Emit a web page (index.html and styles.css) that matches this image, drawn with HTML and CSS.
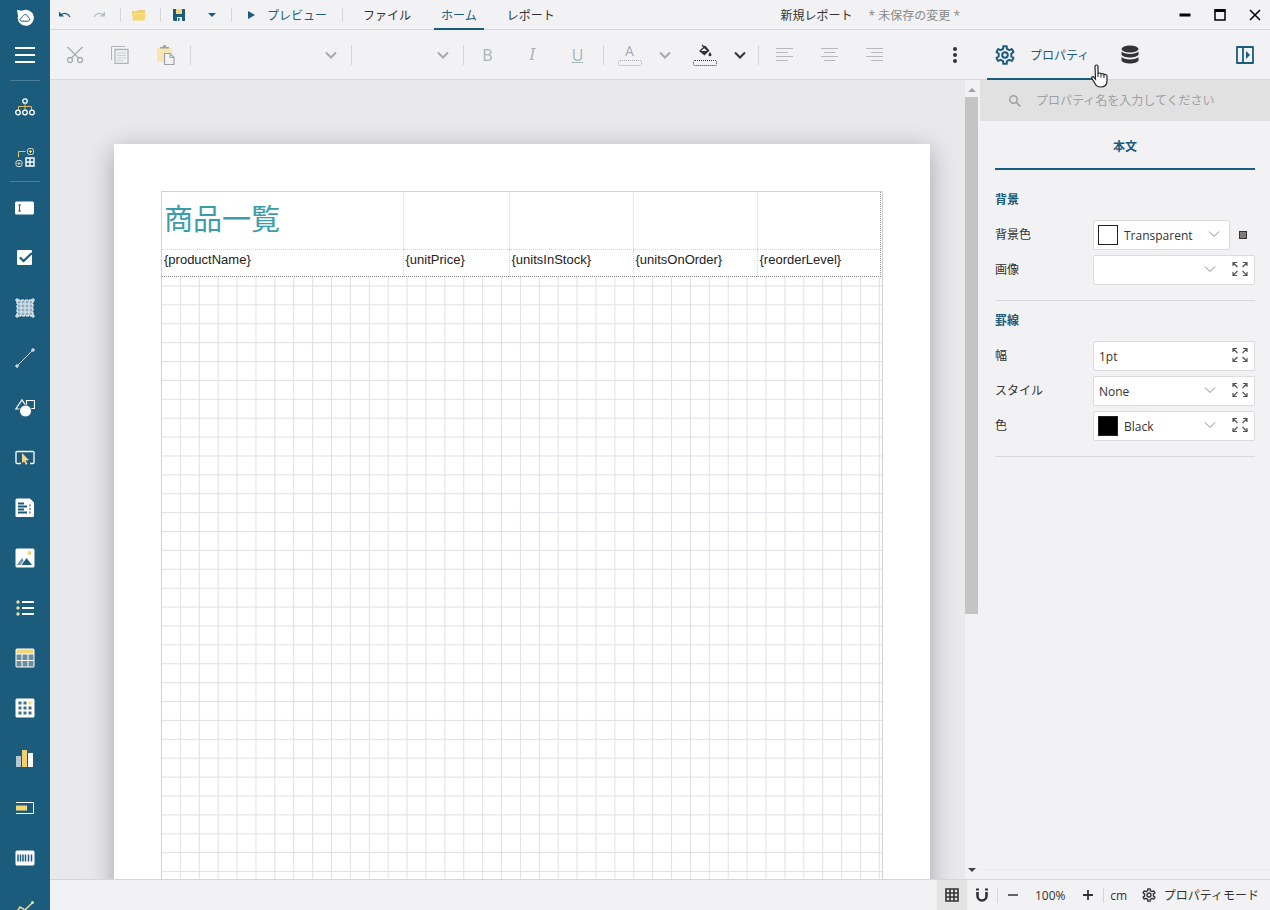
FILE: index.html
```html
<!DOCTYPE html>
<html lang="ja">
<head>
  <meta charset="UTF-8" />
  <meta name="viewport" content="width=device-width, initial-scale=1.0" />
  <title>新規レポート</title>
  <link rel="stylesheet" href="styles.css">
</head>
<body>
  <svg class="symbols" aria-hidden="true">
    <symbol id="gear" viewBox="0 0 20 20">
      <path d="M8.100 3.800L8.300 1.200h3.400l.2 2.600 2.500 1.400 2.400-1.100 1.700 3-2.200 1.400v3l2.200 1.400-1.700 3-2.400-1.100-2.500 1.400-.2 2.600H8.300l-.2-2.600-2.500-1.400-2.400 1.100-1.700-3 2.200-1.400v-3L1.500 7.100l1.700-3 2.400 1.100z" fill="none" stroke="currentColor" stroke-width="2" stroke-linejoin="round"/>
      <circle cx="10" cy="10" r="2.800" fill="none" stroke="currentColor" stroke-width="2"/>
    </symbol>
    <symbol id="chevron" viewBox="0 0 12 8">
      <path d="M1 1.500l5 5 5-5" fill="none" stroke="currentColor" stroke-width="2"/>
    </symbol>
    <symbol id="chevron-thin" viewBox="0 0 12 8">
      <path d="M1 1.500l5 5 5-5" fill="none" stroke="currentColor" stroke-width="1"/>
    </symbol>
    <symbol id="expand" viewBox="0 0 16 16">
      <path d="M1 5V1.500h4M1.500 2l4 4M11 1.500h4V5M14.500 2l-4 4M1 11v3.500h4M1.500 14l4-4M11 14.500h4V11M14.500 14l-4-4" fill="none" stroke="currentColor" stroke-width="1.200"/>
    </symbol>
  </svg>

  <div class="app">
    <nav class="sidebar">
      <div class="logo">
        <svg width="18" height="18" viewBox="0 0 18 18">
          <path d="M1 1l5 .8A8 8 0 1 1 2 7z" fill="#fff"/>
          <path d="M9.500 5.500c1.400 0 1.900 1.300 2.500 2.600 1 .4 2 1.200 1.600 2.600-.3 1.200-1.300 1.500-2.300 1.500H6c-1.500 0-2.300-1.300-1.700-2.500.3-.8 1-1.100 1.700-1.200.8-1.500 1.800-3 3.500-3z" fill="none" stroke="#1b5b7c"/>
        </svg>
      </div>
      <button class="menu" aria-label="メニュー">
        <svg width="20" height="16" viewBox="0 0 20 16"><path d="M0 1h20M0 8h20M0 15h20" stroke="#fff" stroke-width="2"/></svg>
      </button>
      <hr>
      <button class="tool" aria-label="エクスプローラー">
        <svg width="20" height="18" viewBox="0 0 20 18" fill="none">
          <path d="M10 6v6M3.500 12V8.500h13V12" stroke="#d9b968"/>
          <g stroke="#fff" stroke-width="1.300"><circle cx="10" cy="3" r="2.200"/><circle cx="3" cy="14.500" r="2.300"/><circle cx="10" cy="14.500" r="2.300"/><circle cx="17" cy="14.500" r="2.300"/></g>
        </svg>
      </button>
      <button class="tool" aria-label="グループ">
        <svg width="20" height="20" viewBox="0 0 20 20" fill="none">
          <path d="M3.500 10V4.500h7" stroke="#e3c56c"/>
          <g stroke="#cfdde4"><rect x="12.500" y="1.500" width="6" height="6" rx="2"/><rect x="1" y="13.500" width="6" height="6" rx="2"/></g>
          <path d="M15.500 3v3M14 4.500h3M4 15v3M2.500 16.500h3" stroke="#f5d671"/>
          <path d="M11 11h8v8h-8zM15 11v8M11 15h8" stroke="#fff" stroke-width="1.400"/>
        </svg>
      </button>
      <hr>
      <button class="tool" aria-label="テキストボックス">
        <svg width="20" height="14" viewBox="0 0 20 14"><rect x="0" y="0.500" width="19" height="13" rx="1.500" fill="#fff"/><path d="M3 4h3M3 10h3M4.500 4v6" stroke="#555" stroke-width="1"/></svg>
      </button>
      <button class="tool" aria-label="チェックボックス">
        <svg width="16" height="16" viewBox="0 0 16 16"><rect width="15" height="15" rx="1" fill="#fff"/><path d="M3 7.500l3.500 3.500L15 3" fill="none" stroke="#1b5b7c" stroke-width="2.200"/></svg>
      </button>
      <button class="tool" aria-label="コンテナ">
        <svg width="20" height="20" viewBox="0 0 20 20" fill="none">
          <rect x="2" y="2" width="16" height="16" fill="#8eadbd"/>
          <path d="M2 6h16M2 10h16M2 14h16M6 2v16M10 2v16M14 2v16" stroke="#e5eef2"/>
          <rect x="2" y="2" width="16" height="16" stroke="#fff" stroke-dasharray="3 1"/>
          <path d="M1 1h2v2H1zM17 1h2v2h-2zM1 17h2v2H1zM17 17h2v2h-2z" fill="#1b5b7c" stroke="#fff"/>
        </svg>
      </button>
      <button class="tool" aria-label="ライン">
        <svg width="20" height="20" viewBox="0 0 20 20"><path d="M2.500 17.500l15-15" stroke="#c4d5dd"/><path d="M1 17h2v2H1zM17 1h2v2h-2z" fill="#1b5b7c" stroke="#fff"/></svg>
      </button>
      <button class="tool" aria-label="図形">
        <svg width="20" height="18" viewBox="0 0 20 18"><path d="M11.500 1.500h8v8h-8zM.8 10L7 .8 11 7l-4 3z" fill="none" stroke="#fff" stroke-width="1.200"/><circle cx="10.500" cy="12" r="6" fill="#fff" stroke="#1b5b7c"/></svg>
      </button>
      <button class="tool" aria-label="入力フィールド">
        <svg width="20" height="16" viewBox="0 0 20 16"><path d="M6 13.500H2a1 1 0 0 1-1-1v-10a1 1 0 0 1 1-1h16a1 1 0 0 1 1 1v10a1 1 0 0 1-1 1h-3" fill="none" stroke="#fff" stroke-width="1.300"/><path d="M7 3l7 7-3.200.4 1.700 3.600-1.700.8L9 11.200 7 13.500z" fill="#f5d38a"/></svg>
      </button>
      <button class="tool" aria-label="サブレポート">
        <svg width="20" height="20" viewBox="0 0 20 20"><path d="M2 .5h13l4 4V18a1 1 0 0 1-1 1H1.500a1 1 0 0 1-1-1V2A1.500 1.500 0 0 1 2 .5z" fill="#fff"/><path d="M3 5.500h6M3 8.500h9M3 11.500h6M3 14.500h9" stroke="#1b5b7c" stroke-width="1.800"/><path d="M14 7.500h2M14 11h2M14 14.500h2" stroke="#999" stroke-width="1.800"/></svg>
      </button>
      <button class="tool" aria-label="画像">
        <svg width="20" height="20" viewBox="0 0 20 20"><rect x="0.500" y="0.500" width="19" height="19" rx="1.500" fill="#fff"/><circle cx="14.500" cy="5" r="2" fill="#f5d671"/><path d="M2 17l5-7 5 7z" fill="#6d93a8"/><path d="M6.500 17L11.500 10l5.500 7z" fill="#1b5b7c"/><path d="M6 17l4-6" stroke="#fff"/></svg>
      </button>
      <button class="tool" aria-label="リスト">
        <svg width="18" height="16" viewBox="0 0 18 16"><path d="M6 2h12M6 8h12M6 14h12" stroke="#fff" stroke-width="2"/><g fill="#f3d9a0"><circle cx="2" cy="2" r="1.700"/><circle cx="2" cy="8" r="1.700"/><circle cx="2" cy="14" r="1.700"/></g></svg>
      </button>
      <button class="tool" aria-label="テーブル">
        <svg width="20" height="20" viewBox="0 0 20 20"><rect x="0.500" y="0.500" width="19" height="19" rx="1.500" fill="#fff"/><path d="M1.500 1.500h17v4h-17z" fill="#f5d671"/><path d="M1.500 6.500h5V12h-5zM7.500 6.500h5V12h-5zM13.500 6.500h5V12h-5zM1.500 13h5v5.500h-5zM7.500 13h5v5.500h-5zM13.500 13h5v5.500h-5z" fill="#6a8c9f"/></svg>
      </button>
      <button class="tool" aria-label="マトリックス">
        <svg width="20" height="20" viewBox="0 0 20 20"><rect x="0.500" y="0.500" width="19" height="19" rx="1.500" fill="#fff"/><path d="M3.500 3.500h3v3h-3zM8.500 3.500h3v3h-3zM3.500 8.500h3v3h-3zM8.500 8.500h3v3h-3zM13.500 8.500h3v3h-3zM3.500 13.500h3v3h-3zM8.500 13.500h3v3h-3zM13.500 13.500h3v3h-3z" fill="#3e6e88"/><path d="M13.500 3.500h3v3h-3z" fill="#f5d671"/></svg>
      </button>
      <button class="tool" aria-label="チャート">
        <svg width="18" height="18" viewBox="0 0 18 18"><path d="M0 7h5v11H0z" fill="#b5c7d1"/><path d="M6 1h5v17H6z" fill="#f0d070"/><path d="M12 4h5v14h-5z" fill="#fff"/></svg>
      </button>
      <button class="tool" aria-label="ブレットグラフ">
        <svg width="18" height="12" viewBox="0 0 18 12"><path d="M0 .5h17.500v11H0" fill="none" stroke="#fff"/><path d="M0 3.500h11v5H0z" fill="#f5d671"/></svg>
      </button>
      <button class="tool" aria-label="バーコード">
        <svg width="20" height="16" viewBox="0 0 20 16"><rect x="0.500" y="0.500" width="19" height="15" rx="1.500" fill="#fff"/><path d="M3 4.500v7M5.500 4.500v7M8 4.500v7M10.500 4.500v7M13.500 4.500v7M16.500 4.500v7" stroke="#1b5b7c" stroke-width="1.500"/></svg>
      </button>
      <button class="tool" aria-label="スパークライン">
        <svg width="20" height="16" viewBox="0 0 20 16"><path d="M1 13l4-6 5 3 8-8" fill="none" stroke="#f0d9a0" stroke-width="1.500"/><circle cx="17.500" cy="2.500" r="1.500" fill="#f0d9a0"/></svg>
      </button>
    </nav>

    <div class="workspace">
      <header class="titlebar">
        <button class="quick" aria-label="元に戻す">
          <svg width="12" height="8" viewBox="0 0 12 8"><path d="M0 .5v5h5z" fill="#1b5b7c"/><path d="M2 4c3-2.500 7-2 9 2" fill="none" stroke="#1b5b7c" stroke-width="1.200"/></svg>
        </button>
        <button class="quick" aria-label="やり直し" disabled>
          <svg width="12" height="8" viewBox="0 0 12 8"><path d="M12 .5v5H7z" fill="#b5bcc2"/><path d="M10 4C7 1.500 3 2 1 6" fill="none" stroke="#b5bcc2" stroke-width="1.200"/></svg>
        </button>
        <span class="divider"></span>
        <button class="quick" aria-label="開く">
          <svg width="14" height="12" viewBox="0 0 14 12"><path d="M0 2h5l1-1h7v3H2L0 9z" fill="#f0cf70"/><path d="M2 4.500h12l-1.500 7H.5z" fill="#f5d671"/></svg>
        </button>
        <span class="divider"></span>
        <button class="quick" aria-label="保存">
          <svg width="12" height="12" viewBox="0 0 12 12"><path d="M0 0h12v12H1l-1-1z" fill="#1b5b7c"/><path d="M3 0h6v5H3z" fill="#f5d671"/><path d="M4 8h5v4H4z" fill="#f2f2f4"/><path d="M5 9h1.500v3H5z" fill="#1b5b7c"/></svg>
        </button>
        <button class="quick narrow" aria-label="保存オプション">
          <svg width="8" height="4" viewBox="0 0 8 4"><path d="M0 0h8L4 4z" fill="#1b5b7c"/></svg>
        </button>
        <span class="divider"></span>
        <button class="preview">
          <svg width="7" height="8" viewBox="0 0 7 8"><path d="M0 0l7 4-7 4z" fill="#1b5b7c"/></svg>
          プレビュー
        </button>
        <span class="divider"></span>
        <div class="ribbon-tabs" role="tablist">
          <button role="tab">ファイル</button>
          <button role="tab" class="active">ホーム</button>
          <button role="tab">レポート</button>
        </div>
        <div class="doc-title">
          <span>新規レポート</span>
          <span class="unsaved">* 未保存の変更 *</span>
        </div>
        <div class="window-buttons">
          <button aria-label="最小化"><svg width="12" height="12" viewBox="0 0 12 12"><path d="M0.500 6h11" stroke="#000" stroke-width="3"/></svg></button>
          <button aria-label="最大化"><svg width="12" height="12" viewBox="0 0 12 12"><path d="M1 1h10v10H1z" fill="none" stroke="#000" stroke-width="1.500"/><path d="M0.500 1.500h11" stroke="#000" stroke-width="3"/></svg></button>
          <button aria-label="閉じる"><svg width="12" height="12" viewBox="0 0 12 12"><path d="M1 1l10 10M11 1L1 11" stroke="#000" stroke-width="1.500"/></svg></button>
        </div>
      </header>

      <div class="main">
        <div class="designer">
          <div class="toolbar">
            <button class="tb" aria-label="切り取り" disabled>
              <svg width="18" height="18" viewBox="0 0 18 18" fill="none" stroke="#a3adb2" stroke-width="1.300"><path d="M1.500 1L13 12.500M16.500 1L5 12.500"/><circle cx="4" cy="14" r="2.500"/><circle cx="14" cy="14" r="2.500"/></svg>
            </button>
            <button class="tb" aria-label="コピー" disabled>
              <svg width="18" height="18" viewBox="0 0 18 18" fill="none" stroke="#adb5b9"><path d="M.5 14V.5H14"/><path d="M4 3.500h13v14H4z" stroke-width="1.300"/><path d="M6 7h9M6 9.500h9M6 12h9M6 14.500h6" stroke="#c8cdd0"/></svg>
            </button>
            <button class="tb" aria-label="貼り付け" disabled>
              <svg width="20" height="20" viewBox="0 0 20 20"><path d="M2 3h15v14H2z" fill="#f5e6b4"/><path d="M5 3.500h9V2h-2.500a2 2 0 0 0-4 0H5z" fill="#9da4a6"/><path d="M9.500 8.500h5.500l4 4v7H9.500z" fill="#f2f2f4" stroke="#9aa5aa" stroke-width="1.200"/><path d="M15 8.500v4h4" fill="none" stroke="#9aa5aa"/></svg>
            </button>
            <span class="divider"></span>
            <div class="tb-select font-name">
              <select aria-label="フォント" disabled><option></option></select>
              <svg class="arrow"><use href="#chevron"/></svg>
            </div>
            <span class="divider"></span>
            <div class="tb-select font-size">
              <select aria-label="サイズ" disabled><option></option></select>
              <svg class="arrow"><use href="#chevron"/></svg>
            </div>
            <span class="divider"></span>
            <button class="tb letter" disabled>B</button>
            <button class="tb letter italic" disabled>I</button>
            <button class="tb letter underline" disabled>U</button>
            <span class="divider"></span>
            <div class="split muted">
              <button class="tb color" aria-label="文字色" disabled>
                <span class="glyph">A</span>
                <span class="swatch-line"></span>
              </button>
              <button class="drop" aria-label="文字色を選択" disabled><svg class="arrow"><use href="#chevron"/></svg></button>
            </div>
            <div class="split">
              <button class="tb color" aria-label="塗りつぶし">
                <svg width="14" height="14" viewBox="0 0 14 14"><path d="M4 1l6 6M2 7l5-4.500L11 7" fill="none" stroke="#333" stroke-width="1.300"/><path d="M1 7h10l-4.500 4.500z" fill="#333"/><path d="M12 8c.7 1 1.500 2 1.500 2.800a1.500 1.500 0 0 1-3 0C10.500 10 11.300 9 12 8z" fill="#333"/></svg>
                <span class="swatch-line"></span>
              </button>
              <button class="drop" aria-label="塗りつぶし色を選択"><svg class="arrow"><use href="#chevron"/></svg></button>
            </div>
            <span class="divider"></span>
            <div class="align">
              <button class="tb" aria-label="左揃え" disabled><svg width="17" height="14" viewBox="0 0 17 14"><path d="M0 .5h17M0 4.500h12M0 8.500h17M0 12.500h12" stroke="#b5b9bb"/></svg></button>
              <button class="tb" aria-label="中央揃え" disabled><svg width="17" height="14" viewBox="0 0 17 14"><path d="M0 .5h17M3 4.500h11M0 8.500h17M3 12.500h11" stroke="#b5b9bb"/></svg></button>
              <button class="tb" aria-label="右揃え" disabled><svg width="17" height="14" viewBox="0 0 17 14"><path d="M0 .5h17M5 4.500h12M0 8.500h17M5 12.500h12" stroke="#b5b9bb"/></svg></button>
            </div>
            <button class="tb more" aria-label="その他"><svg width="4" height="16" viewBox="0 0 4 16" fill="#333"><circle cx="2" cy="2" r="2"/><circle cx="2" cy="8" r="2"/><circle cx="2" cy="14" r="2"/></svg></button>
          </div>

          <div class="canvas-area">
            <div class="canvas">
              <div class="page">
                <div class="page-body">
                  <table class="report-table">
                    <colgroup><col class="c-name"><col class="c-price"><col class="c-units"><col class="c-units"><col></colgroup>
                    <tr class="head"><td class="report-title">商品一覧</td><td></td><td></td><td></td><td></td></tr>
                    <tr><td>{productName}</td><td>{unitPrice}</td><td>{unitsInStock}</td><td>{unitsOnOrder}</td><td>{reorderLevel}</td></tr>
                  </table>
                </div>
              </div>
            </div>
            <div class="scrollbar">
              <svg width="8" height="4" viewBox="0 0 8 4"><path d="M0 4h8L4 0z" fill="#a0a0a0"/></svg>
              <div class="track"><div class="thumb"></div></div>
              <svg width="8" height="4" viewBox="0 0 8 4"><path d="M0 0h8L4 4z" fill="#444"/></svg>
            </div>
          </div>
        </div>

        <aside class="panel">
          <div class="panel-tabs">
            <button class="panel-tab active">
              <svg width="20" height="20"><use href="#gear"/></svg>
              プロパティ
              <!-- hand pointer over the tab -->
              <svg class="pointer" width="18" height="24" viewBox="0 0 18 24"><path d="M4 2.500c0-2 3-2 3 0V10c.3-1.500 3-1.300 3 .4.500-1.300 3-1 3 .6.700-1 3-.7 3 1.200V17c0 4-2.500 6-6.500 6-3 0-4.500-1.500-5.500-3.500L1 14.500c-.8-1.600 1-2.600 2-1.200L4.500 15z" fill="#fff" stroke="#222" stroke-width="1.200"/><path d="M7 10v3M10 10.500v3M13 11.500v2.500" stroke="#222"/></svg>
            </button>
            <button class="data-tab" aria-label="データ">
              <svg width="18" height="20" viewBox="0 0 18 20" fill="#333"><ellipse cx="9" cy="4" rx="8.500" ry="3.500"/><path d="M.5 6.500C3 9.800 15 9.800 17.500 6.500v3C16 13.500 2 13.500.5 9.500z"/><path d="M.5 12C3 15.300 15 15.300 17.500 12v3.500c-1.500 4-15.500 4-17 0z"/></svg>
            </button>
            <button class="collapse" aria-label="パネルを閉じる">
              <svg width="18" height="18" viewBox="0 0 18 18"><path d="M1 1h16v16H1zM7 1v16" fill="none" stroke="#1b5b7c" stroke-width="1.800" stroke-linejoin="round"/><path d="M10 5l4 4-4 4z" fill="#1b5b7c"/></svg>
            </button>
          </div>
          <div class="search">
            <svg width="12" height="12" viewBox="0 0 12 12"><circle cx="4.500" cy="4.500" r="3.700" fill="none" stroke="#a0a0a0" stroke-width="1.500"/><path d="M7.300 7.300l4 4" stroke="#a0a0a0" stroke-width="1.800"/></svg>
            <input type="text" aria-label="プロパティ名" placeholder="プロパティ名を入力してください">
          </div>
          <div class="panel-body">
            <h2 class="target">本文</h2>

            <section>
              <h3>背景</h3>
              <div class="row">
                <label for="bgColor">背景色</label>
                <div class="field">
                  <span class="swatch"></span>
                  <select id="bgColor"><option>Transparent</option></select>
                  <svg class="arrow"><use href="#chevron-thin"/></svg>
                </div>
                <button class="marker" aria-label="詳細"></button>
              </div>
              <div class="row">
                <label for="bgImage">画像</label>
                <div class="field">
                  <select id="bgImage"><option></option></select>
                  <svg class="arrow"><use href="#chevron-thin"/></svg>
                  <button class="expand" aria-label="展開"><svg width="16" height="16"><use href="#expand"/></svg></button>
                </div>
              </div>
            </section>

            <section>
              <h3>罫線</h3>
              <div class="row">
                <label for="borderWidth">幅</label>
                <div class="field">
                  <input id="borderWidth" type="text" value="1pt">
                  <button class="expand" aria-label="展開"><svg width="16" height="16"><use href="#expand"/></svg></button>
                </div>
              </div>
              <div class="row">
                <label for="borderStyle">スタイル</label>
                <div class="field">
                  <select id="borderStyle"><option>None</option></select>
                  <svg class="arrow"><use href="#chevron-thin"/></svg>
                  <button class="expand" aria-label="展開"><svg width="16" height="16"><use href="#expand"/></svg></button>
                </div>
              </div>
              <div class="row">
                <label for="borderColor">色</label>
                <div class="field">
                  <span class="swatch black"></span>
                  <select id="borderColor"><option>Black</option></select>
                  <svg class="arrow"><use href="#chevron-thin"/></svg>
                  <button class="expand" aria-label="展開"><svg width="16" height="16"><use href="#expand"/></svg></button>
                </div>
              </div>
            </section>
          </div>
        </aside>
      </div>

      <footer class="statusbar">
        <button class="active" aria-label="グリッド"><svg width="14" height="14" viewBox="0 0 14 14"><path d="M1 1h12v12H1zM5 1v12M9 1v12M1 5h12M1 9h12" fill="none" stroke="#333" stroke-width="1.600"/></svg></button>
        <button aria-label="スナップ"><svg width="12" height="14" viewBox="0 0 12 14"><path d="M1.500 4v4a4.500 4.500 0 0 0 9 0V4" fill="none" stroke="#333" stroke-width="2.600"/><path d="M0 .5h3v2H0zM9 .5h3v2H9z" fill="#333"/></svg></button>
        <span class="divider"></span>
        <button aria-label="縮小"><svg width="10" height="10" viewBox="0 0 10 10"><path d="M0 5h10" stroke="#333" stroke-width="1.500"/></svg></button>
        <span class="zoom">100%</span>
        <button aria-label="拡大"><svg width="10" height="10" viewBox="0 0 10 10"><path d="M0 5h10M5 0v10" stroke="#333" stroke-width="1.800"/></svg></button>
        <span class="divider"></span>
        <button>cm</button>
        <button class="mode"><svg width="14" height="14"><use href="#gear"/></svg>プロパティモード</button>
      </footer>
    </div>
  </div>
</body>
</html>
```
FILE: styles.css
```css
* {
  box-sizing: border-box;
}
body {
  margin: 0;
  font-family: "Open Sans", "Noto Sans CJK JP", sans-serif;
  font-size: 12px;
  color: #333;
  background: #f2f2f4;
}
button, select, input {
  font: inherit;
  color: inherit;
  border: none;
  background: none;
  padding: 0;
  margin: 0;
  appearance: none;
  outline: none;
}
select:disabled {
  opacity: 1;
}
svg {
  display: block;
  flex: none;
}
.symbols {
  display: none;
}
.app {
  display: flex;
  height: 100vh;
  overflow: hidden;
}
.divider {
  flex: none;
  width: 1px;
  background: #d6d6d8;
}

/* left tool box */
.sidebar {
  flex: none;
  width: 50px;
  background: #1b5b7c;
  overflow: hidden;
}
.sidebar button, .logo {
  display: flex;
  align-items: center;
  justify-content: center;
  width: 50px;
  height: 50px;
}
.sidebar .logo {
  height: 30px;
  padding-top: 5px;
}
.sidebar .tool {
  padding: 1px 1px 0 0;
}
.sidebar hr {
  width: 30px;
  height: 1px;
  margin: 0 auto;
  border: none;
  background: #4a7f99;
}

.workspace {
  flex: 1;
  min-width: 0;
  display: flex;
  flex-direction: column;
}

/* title bar */
.titlebar {
  flex: none;
  height: 30px;
  display: flex;
  border-bottom: 1px solid #d6d6d8;
}
.titlebar > * {
  flex: none;
}
.titlebar .divider {
  margin: 8px 3px 7px 2px;
}
.quick {
  display: flex;
  align-items: center;
  justify-content: center;
  width: 34px;
  padding-right: 4px;
}
.quick.narrow {
  width: 31px;
}
.preview {
  display: flex;
  align-items: center;
  gap: 12px;
  padding: 0 13px 0 13px;
  color: #1b5b7c;
}
.ribbon-tabs {
  display: flex;
  gap: 16px;
  margin-left: 10px;
}
.ribbon-tabs button {
  padding: 2px 7px 0;
  height: 30px;
  border-bottom: 2px solid transparent;
}
.ribbon-tabs .active {
  color: #1b5b7c;
  border-color: #1b5b7c;
}
.titlebar .doc-title {
  flex: 1;
  display: flex;
  align-items: center;
  justify-content: center;
  gap: 16px;
  padding-left: 14px;
}
.unsaved {
  color: #888;
}
.window-buttons {
  display: flex;
}
.window-buttons button {
  display: flex;
  align-items: center;
  justify-content: center;
  width: 35px;
  padding-left: 4px;
}

.main {
  flex: 1;
  min-height: 0;
  display: flex;
}
.designer {
  flex: 1;
  min-width: 0;
  display: flex;
  flex-direction: column;
}

/* toolbar */
.toolbar {
  flex: none;
  height: 50px;
  display: flex;
  align-items: center;
  padding: 0 3px 0 2px;
  border-bottom: 1px solid #d6d6d8;
}
.toolbar .divider {
  height: 20px;
  margin: 0 1px 0 3px;
}
.tb {
  flex: none;
  width: 45px;
  height: 49px;
  display: flex;
  align-items: center;
  justify-content: center;
}
.arrow {
  width: 12px;
  height: 8px;
}
.tb-select {
  display: flex;
  align-items: center;
  padding-right: 11px;
  color: #a9a9ab;
}
.tb-select select {
  flex: 1;
  min-width: 0;
  height: 30px;
}
.font-name {
  width: 156px;
}
.font-size {
  width: 107px;
}
.letter {
  font-size: 16px;
  color: #a9b4b8;
}
.italic {
  font-family: "DejaVu Serif", serif;
  font-style: italic;
}
.underline {
  text-decoration: underline;
}
.split {
  display: flex;
  padding: 0 3px 0 2px;
}
.split.muted {
  color: #a9a9ab;
}
.color {
  flex-direction: column;
  gap: 2px;
}
.glyph {
  font-size: 14px;
  line-height: 14px;
}
.swatch-line {
  width: 24px;
  height: 6px;
  border: 1px dotted currentColor;
  border-radius: 2px;
}
.drop {
  width: 25px;
  display: flex;
  align-items: center;
  justify-content: center;
}
.align {
  display: flex;
  padding-left: 2px;
}
.more {
  margin-left: auto;
}

/* design surface */
.canvas-area {
  flex: 1;
  min-height: 0;
  display: flex;
  background: #e9e9eb;
}
.canvas {
  flex: 1;
  min-width: 0;
  overflow: hidden;
  padding: 64px;
}
.page {
  width: 816px;
  height: 1056px;
  padding: 48px;
  background: #fff;
  box-shadow: 0 6px 24px rgba(0, 0, 0, 0.3);
}
.page-body {
  height: 100%;
  outline: 1px solid #cfd1d3;
  background-image:
    linear-gradient(to right, #dfe0e6 1px, transparent 1px),
    linear-gradient(to bottom, #dfe0e6 1px, transparent 1px);
  background-size: 0.5cm 0.5cm;
  background-position: -1px -1px;
}
.report-table {
  table-layout: fixed;
  width: 719px;
  border-collapse: collapse;
  background: #fff;
  border-right: 1px dotted #999;
  border-bottom: 1px dotted #888;
  font-family: "Liberation Sans", "Noto Sans CJK JP", sans-serif;
  font-size: 13px;
  line-height: 16px;
  color: #222;
}
.c-name {
  width: 241px;
}
.c-price {
  width: 106px;
}
.c-units {
  width: 124px;
}
.report-table td {
  height: 27px;
  padding: 2px;
  vertical-align: top;
}
.report-table td + td {
  border-left: 1px dotted #d6d6d6;
}
.report-table .head td {
  height: 57px;
  border-bottom: 1px dotted #d6d6d6;
  vertical-align: middle;
}
.report-table .report-title {
  font-size: 29px;
  line-height: 40px;
  color: #3a9daa;
}
.scrollbar {
  flex: none;
  width: 15px;
  display: flex;
  flex-direction: column;
  align-items: center;
  padding: 8px 2px 7px 0;
  background: #f2f2f4;
}
.track {
  flex: 1;
  width: 13px;
  margin: 5px 0;
}
.thumb {
  height: 67.5%;
  background: #c3c5c5;
}

/* property panel */
.panel {
  flex: none;
  width: 290px;
  display: flex;
  flex-direction: column;
}
.panel-tabs {
  flex: none;
  height: 50px;
  display: flex;
  padding-left: 7px;
  border-bottom: 1px solid #d6d6d8;
}
.panel-tabs button {
  display: flex;
  align-items: center;
  justify-content: center;
}
.panel-tabs .panel-tab {
  position: relative;
  height: 50px;
  padding: 2px 11px 0 8px;
  gap: 15px;
  color: #1b5b7c;
  border-bottom: 2px solid #1b5b7c;
}
.pointer {
  position: absolute;
  right: -9px;
  bottom: -10px;
}
.data-tab {
  width: 60px;
}
.collapse {
  width: 50px;
  margin-left: auto;
}
.search {
  flex: none;
  height: 41px;
  display: flex;
  align-items: center;
  gap: 15px;
  padding: 0 15px 0 29px;
  background: #e1e1e2;
}
.search input {
  flex: 1;
  min-width: 0;
  height: 30px;
}
.search input::placeholder {
  color: #a0a0a0;
}
.panel-body {
  flex: 1;
  margin-bottom: 9px;
  padding: 0 15px;
  border-bottom: 1px solid #eaeaea;
}
.target {
  margin: 0 0 10px;
  height: 49px;
  line-height: 52px;
  font-size: 12px;
  text-align: center;
  color: #1b5b7c;
  border-bottom: 2px solid #1b5b7c;
}
section {
  padding: 9px 0 15px;
  border-bottom: 1px solid #d9d9da;
}
section h3 {
  margin: 0 0 9px;
  font-size: 12px;
  line-height: 22px;
  color: #1b5b7c;
}
.row {
  display: flex;
  align-items: center;
  height: 30px;
}
.row + .row {
  margin-top: 5px;
}
.row label {
  width: 98px;
  padding-bottom: 2px;
}
.field {
  flex: 1;
  min-width: 0;
  height: 30px;
  display: flex;
  align-items: center;
  padding-left: 4px;
  background: #fff;
  border: 1px solid #dcdcde;
  border-radius: 2px;
}
.field select, .field input {
  flex: 1;
  min-width: 0;
  height: 28px;
  padding-left: 1px;
}
.field .arrow {
  margin: 0 9px 2px 8px;
  color: #888;
}
.swatch {
  flex: none;
  width: 20px;
  height: 20px;
  margin-right: 5px;
  border: 1px solid #222;
}
.swatch.black {
  background: #000;
}
.expand {
  width: 29px;
  height: 28px;
  display: flex;
  align-items: center;
  justify-content: center;
  padding-bottom: 2px;
  color: #555;
}
.marker {
  width: 8px;
  height: 8px;
  margin: 0 8px 0 9px;
  background: #807a7a;
  border: 1px solid #333;
}

/* status bar */
.statusbar {
  flex: none;
  height: 31px;
  display: flex;
  justify-content: flex-end;
  border-top: 1px solid #d6d6d8;
}
.statusbar button, .zoom {
  display: flex;
  align-items: center;
  justify-content: center;
  width: 30px;
}
.statusbar .active {
  background: #e3e3e4;
}
.statusbar .divider {
  margin: 8px 0 7px;
}
.statusbar .zoom {
  width: 45px;
}
.statusbar .mode {
  width: auto;
  gap: 8px;
  padding: 0 11px 0 8px;
}
```
